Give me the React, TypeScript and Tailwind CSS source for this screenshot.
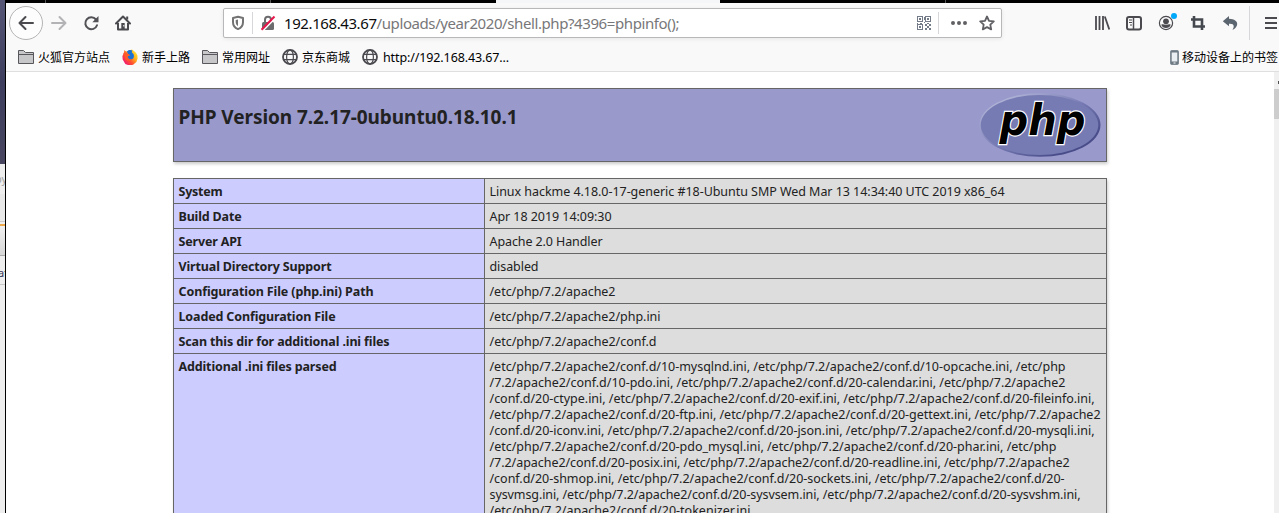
import { useLayoutEffect, useRef, useState, type ReactNode } from "react";

/** A single line of text whose tracking is adjusted to fill the given width. */
function Line({ text, width, className = "", children }: { text: string; width: number; className?: string; children?: ReactNode }) {
  const ref = useRef<HTMLSpanElement>(null);
  const [tracking, setTracking] = useState(0);
  useLayoutEffect(() => {
    if (ref.current) {
      const natural = ref.current.getBoundingClientRect().width;
      setTracking((width - natural) / text.length);
    }
  }, [text, width]);
  return (
    <span className={`block w-max whitespace-pre ${className}`}>
      <span ref={ref} style={{ letterSpacing: tracking }}>
        {children ?? text}
      </span>
    </span>
  );
}

function Icon({ children, className = "text-[#4a4a4f]" }: { children: ReactNode; className?: string }) {
  return (
    <svg viewBox="0 0 16 16" fill="none" stroke="currentColor" strokeWidth="2" className={`block h-4 w-4 shrink-0 ${className}`}>
      {children}
    </svg>
  );
}

const Folder = () => (
  <Icon className="text-[#58585c]">
    <path d="M.5 14.500v-13h5l2 2h8v11z" fill="#c7c7ca" strokeWidth="1" />
    <path d="M1 5.500h14" strokeWidth="1" />
  </Icon>
);

const Globe = () => (
  <Icon className="text-[#4a4a4f]">
    <circle cx="8" cy="8" r="7" strokeWidth="1.800" />
    <ellipse cx="8" cy="8" rx="3.400" ry="7" strokeWidth="1.200" />
    <path d="M1.500 5.300h13M1.500 10.700h13" strokeWidth="1.200" />
  </Icon>
);

const Firefox = () => (
  <svg viewBox="0 0 16 16" className="block h-4 w-4 shrink-0">
    <defs>
      <linearGradient id="flame" x1="1" y1="0.1" x2="0.1" y2="0.9">
        <stop offset="0" stopColor="#fff044" />
        <stop offset=".35" stopColor="#ffb51b" />
        <stop offset=".65" stopColor="#ff4f32" />
        <stop offset="1" stopColor="#f0127a" />
      </linearGradient>
    </defs>
    <path d="M2 3.2 2.4 1l1.7 1.4L6 2l4-1.6 2.5 2.2 1.4 1.2 1.5 2.5.2 3.2-1.2 3.5-3.3 2.8-4 .7-3.8-1.6L.7 10.6.4 7.2z" fill="url(#flame)" />
    <path d="M5 2.2c2-1.6 4.2-1.5 5.3-.6l-.5 1.8c2 1.2 2.6 3 1.9 5-.8 2-3.2 2.5-4.8 1.4L5.4 7.5 8 6.2 5.8 4.8z" fill="#1b72d5" />
    <path d="M1.5 4.2 4 3.8l2 1 1.9 1.3-2 1.1-.6 1.5c1 1.9 3 2.3 4.8 1.3-1 2.3-4.8 2.7-6.7.2z" fill="#ff5a27" />
  </svg>
);

const Phone = () => (
  <svg viewBox="0 0 9 15" className="block h-[15px] w-[9px] shrink-0">
    <rect x=".5" y=".5" width="8" height="14" rx="1.200" fill="#6f7b84" stroke="#7e8991" />
    <path d="M1.700 2.500h5.600v9H1.700z" fill="#e9eff2" />
    <path d="M3.500 13h2" stroke="#fff" strokeWidth="1" />
  </svg>
);

const QrCode = () => (
  <svg viewBox="0 0 14 14" fill="none" stroke="#737b88" className="block h-[14px] w-[14px] shrink-0" shapeRendering="crispEdges">
    <path d="M.5.5h5v5h-5zM8.5.5h5v5h-5zM.5 8.5h5v5h-5z" />
    <path d="M2 2h2v2H2zM10 2h2v2h-2zM2 10h2v2H2zM8 8h2v2H8zM10 10h2v2h-2zM12 8h2v2h-2zM8 12h2v2H8zM12 12h2v2h-2zM7 1h1v3H7zM0 7h1v1H0zM3 7h2v1H3zM7 6h1v1H7zM10 7h2v1h-2z" fill="#737b88" stroke="none" />
  </svg>
);

const UrlBar = () => (
  <div className="flex h-[30px] w-[779px] items-center rounded-[2px] border border-[#b8b8ba] bg-white shadow-[0_1px_4px_rgba(0,0,0,0.08)]">
    <div className="flex w-[28px] justify-center">
      <Icon className="text-[#737373]">
        <path d="M8 1.800 13 3v4.200c0 3.300-2.200 5.700-5 6.900-2.800-1.200-5-3.600-5-6.900V3z" strokeLinejoin="round" />
        <path d="M8 4.600v6.600C6.500 10.200 5.700 8.800 5.700 7V5.100z" fill="currentColor" stroke="none" />
      </Icon>
    </div>
    <div className="h-[22px] w-px bg-[#d7d7db]" />
    <div className="flex w-[29px] justify-center">
      <Icon className="text-[#6c6c6e]">
        <path d="M5 7V4.700a3 3 0 0 1 6 0V7" />
        <rect x="2" y="7" width="12" height="8" rx="1.500" fill="currentColor" stroke="none" />
        <path d="M3.200 15.500 15.800 2.500" stroke="#fff" strokeWidth="1.600" />
        <path d="M1.500 14.800 14.500 1.500" stroke="#e6174c" />
      </Icon>
    </div>
    <div className="w-[635px] pl-[2px]">
      <Line text="192.168.43.67/uploads/year2020/shell.php?4396=phpinfo();" width={395} className="text-[15px] leading-5 text-[#777779]">
        <span className="text-[#0c0c0d]">192.168.43.67</span>/uploads/year2020/shell.php?4396=phpinfo();
      </Line>
    </div>
    <QrCode />
    <div className="ml-[7px] mr-3 h-[22px] w-px bg-[#d7d7db]" />
    <Icon className="text-[#606064]">
      <path d="M0 8a2 2 0 1 0 4 0 2 2 0 1 0-4 0M6 8a2 2 0 1 0 4 0 2 2 0 1 0-4 0M12 8a2 2 0 1 0 4 0 2 2 0 1 0-4 0" fill="currentColor" stroke="none" />
    </Icon>
    <div className="ml-3">
      <Icon className="text-[#606064]">
        <path d="m8 1.500 2 4.300 4.800.6-3.500 3.300.9 4.700L8 12.100l-4.200 2.300.9-4.700L1.200 6.400 6 5.800z" strokeWidth="1.800" strokeLinejoin="round" />
      </Icon>
    </div>
  </div>
);

const NavBar = () => (
  <div className="flex h-10 items-center overflow-hidden">
    <div className="ml-[3px] flex h-[34px] w-[34px] shrink-0 items-center justify-center rounded-full border border-[#b4b4b6] bg-[#fdfdfd]">
      <Icon>
        <path d="M15 8H2M7.500 2 1.500 8l6 6" strokeLinecap="round" strokeLinejoin="round" />
      </Icon>
    </div>
    <div className="ml-2 flex gap-4">
      <Icon className="text-[#b3b3b5]">
        <path d="M1 8h13M8.500 2l6 6-6 6" strokeLinecap="round" strokeLinejoin="round" />
      </Icon>
      <Icon className="text-[#525256]">
        <path d="M14 10.200A6 6 0 1 1 13 4.500" strokeLinecap="round" />
        <path d="M15.500 1v6.200H9.300z" fill="currentColor" stroke="none" />
      </Icon>
      <Icon>
        <path d="m1 8.500 7-7 7 7" strokeLinecap="round" strokeLinejoin="round" />
        <path d="M3 8v6.500h10V8M12.200 1.500v3" strokeLinejoin="round" />
        <path d="M6.300 8h3.400v6H6.300z" fill="currentColor" stroke="none" />
        <path d="M8.300 10h1v1.500h-1z" fill="#fff" stroke="none" />
      </Icon>
    </div>
    <div className="ml-[92px] shrink-0">
      <UrlBar />
    </div>
    <div className="ml-[92px] flex shrink-0 gap-4">
      <Icon>
        <path d="M2 1v14M5.500 1v14M9 1v14" strokeWidth="1.800" />
        <path d="m10.800 1.500 4.500 13" strokeWidth="1.800" />
      </Icon>
      <Icon>
        <rect x="1" y="2" width="14" height="12.500" rx="2" />
        <path d="M7.500 2v12" strokeWidth="1.500" />
        <path d="M3 5h3M3 7.500h3M4 10h2" strokeWidth="1" />
      </Icon>
      <div className="relative">
        <Icon>
          <circle cx="8" cy="8" r="6.600" strokeWidth="1.200" />
          <circle cx="8" cy="6.300" r="2.900" fill="currentColor" stroke="none" />
          <path d="M3.300 9.700c1.300-.8 2.500 0 4.700 0s3.400-.8 4.700 0A5 5 0 0 1 8 13a5 5 0 0 1-4.700-3.300z" fill="currentColor" stroke="none" />
        </Icon>
        <div className="absolute -top-[2px] left-[13px] h-[6px] w-[6px] rounded-full bg-[#00a8fa]" />
      </div>
      <Icon className="text-[#45494f]">
        <path d="M4 1v10.500h11M1 4.500h11V15" strokeWidth="2.600" />
      </Icon>
      <Icon className="text-[#5b6570]">
        <path d="M7 1 .8 6.300 7 11.300V8.800c4.500-.3 6 1.500 3.500 6.200 7-3.500 6.500-11-3.500-11.200z" fill="currentColor" stroke="none" />
      </Icon>
    </div>
    <div className="ml-[11px] h-[34px] w-px shrink-0 bg-[#d7d7db]" />
    <svg viewBox="0 0 14 16" className="ml-[15px] block h-4 w-[14px] shrink-0">
      <path d="M0 3h12M0 8h12M0 13h12" stroke="#4a4a4f" strokeWidth="2" />
    </svg>
  </div>
);

const Bookmarks = () => (
  <div className="flex h-7 items-center whitespace-nowrap pl-3 text-[12px] leading-4 text-black">
    <Folder />
    <span className="ml-1 w-[84px] pt-[2px]">火狐官方站点</span>
    <Firefox />
    <span className="ml-1 w-[60px] pt-[2px]">新手上路</span>
    <Folder />
    <span className="ml-1 w-[60px] pt-[2px]">常用网址</span>
    <Globe />
    <span className="ml-1 w-[60px] pt-[2px]">京东商城</span>
    <Globe />
    <Line text="http://192.168.43.67..." width={126} className="ml-[5px] pt-px text-[12.5px]" />
    <div className="ml-auto flex items-center gap-[3px] pr-px">
      <Phone />
      <span className="pt-px">移动设备上的书签</span>
    </div>
  </div>
);

const rows: { name: string; nameWidth: number; value: string; width: number }[] = [
  { name: "System", nameWidth: 44, value: "Linux hackme 4.18.0-17-generic #18-Ubuntu SMP Wed Mar 13 14:34:40 UTC 2019 x86_64", width: 515 },
  { name: "Build Date", nameWidth: 63, value: "Apr 18 2019 14:09:30", width: 122 },
  { name: "Server API", nameWidth: 63, value: "Apache 2.0 Handler", width: 113 },
  { name: "Virtual Directory Support", nameWidth: 153, value: "disabled", width: 49 },
  { name: "Configuration File (php.ini) Path", nameWidth: 195, value: "/etc/php/7.2/apache2", width: 126 },
  { name: "Loaded Configuration File", nameWidth: 157, value: "/etc/php/7.2/apache2/php.ini", width: 171 },
  { name: "Scan this dir for additional .ini files", nameWidth: 211, value: "/etc/php/7.2/apache2/conf.d", width: 167 },
];

const parsedFiles: [string, number][] = [
  ["/etc/php/7.2/apache2/conf.d/10-mysqlnd.ini, /etc/php/7.2/apache2/conf.d/10-opcache.ini, /etc/php", 576],
  ["/7.2/apache2/conf.d/10-pdo.ini, /etc/php/7.2/apache2/conf.d/20-calendar.ini, /etc/php/7.2/apache2", 576],
  ["/conf.d/20-ctype.ini, /etc/php/7.2/apache2/conf.d/20-exif.ini, /etc/php/7.2/apache2/conf.d/20-fileinfo.ini,", 605],
  ["/etc/php/7.2/apache2/conf.d/20-ftp.ini, /etc/php/7.2/apache2/conf.d/20-gettext.ini, /etc/php/7.2/apache2", 611],
  ["/conf.d/20-iconv.ini, /etc/php/7.2/apache2/conf.d/20-json.ini, /etc/php/7.2/apache2/conf.d/20-mysqli.ini,", 605],
  ["/etc/php/7.2/apache2/conf.d/20-pdo_mysql.ini, /etc/php/7.2/apache2/conf.d/20-phar.ini, /etc/php", 567],
  ["/7.2/apache2/conf.d/20-posix.ini, /etc/php/7.2/apache2/conf.d/20-readline.ini, /etc/php/7.2/apache2", 580],
  ["/conf.d/20-shmop.ini, /etc/php/7.2/apache2/conf.d/20-sockets.ini, /etc/php/7.2/apache2/conf.d/20-", 575],
  ["sysvmsg.ini, /etc/php/7.2/apache2/conf.d/20-sysvsem.ini, /etc/php/7.2/apache2/conf.d/20-sysvshm.ini,", 591],
  ["/etc/php/7.2/apache2/conf.d/20-tokenizer.ini", 261],
];

const PhpLogo = () => (
  <svg viewBox="0 0 122 64" className="block h-16 w-[122px]">
    <defs>
      <linearGradient id="rim" x1="0" y1="0" x2="1" y2="1">
        <stop offset=".15" stopColor="#aeb2d5" />
        <stop offset=".5" stopColor="#777bb3" />
        <stop offset=".8" stopColor="#484c89" />
      </linearGradient>
    </defs>
    <ellipse cx="61" cy="32" rx="60.500" ry="31.800" fill="url(#rim)" />
    <ellipse cx="60.500" cy="32" rx="58.800" ry="30" fill="#777bb3" />
    <text
      x="20.500"
      y="41.500"
      textLength="86"
      lengthAdjust="spacingAndGlyphs"
      className="font-['DejaVu_Sans',sans-serif] text-[43px] font-bold italic"
      fill="#000"
      stroke="#fff"
      strokeWidth="2.400"
      strokeLinejoin="miter"
      paintOrder="stroke"
    >
      php
    </text>
  </svg>
);

const nameCell = "w-[310px] shrink-0 bg-[#ccccff] pl-[4.500px] pt-[5px] font-bold";
const valueCell = "w-[621px] border-l border-[#666] bg-[#dddddd] pl-[4.500px] pt-[5px]";

const PhpInfo = () => (
  <main className="ml-[167px] w-[934px] pt-4 text-[12.5px] leading-4 text-[#222]">
    <header className="flex h-[74px] justify-between border border-[#666] bg-[#9999cc] pl-[4.500px] pr-[5px] pt-1 shadow-[1px_2px_3px_#cccccc]">
      <h1 className="pt-3">
        <Line text="PHP Version 7.2.17-0ubuntu0.18.10.1" width={339} className="text-[19px] font-bold leading-6" />
      </h1>
      <PhpLogo />
    </header>
    <section className="mt-4 border border-[#666] shadow-[1px_2px_3px_#cccccc]">
      {rows.map((row) => (
        <div key={row.name} className="flex h-[25px] border-b border-[#666]">
          <div className={nameCell}>
            <Line text={row.name} width={row.nameWidth} />
          </div>
          <div className={`grow ${valueCell}`}>
            <Line text={row.value} width={row.width} />
          </div>
        </div>
      ))}
      <div className="flex">
        <div className={nameCell}>
          <Line text="Additional .ini files parsed" width={158} />
        </div>
        <div className={`grow ${valueCell}`}>
          {parsedFiles.map(([text, width]) => (
            <Line key={text} text={text} width={width} />
          ))}
        </div>
      </div>
    </section>
  </main>
);

/** The strip of the desktop and of another window visible left of the browser. */
const DesktopEdge = () => (
  <div className="flex w-[6px] shrink-0 flex-col overflow-hidden border-r border-black bg-[#eeeeee] text-[11px] leading-4">
    <div className="h-[164px] shrink-0 bg-linear-to-b from-[#555575] via-[#3d3d5e] to-[#48465f]" />
    <div className="h-[30px] shrink-0 pt-[7px] text-[#a0a0a0]">
      <span className="-ml-[5px]">py</span>
    </div>
    <div className="h-[28px] shrink-0 border-b border-[#cccccc] bg-[#e8e8e8]" />
    <div className="h-[4px] shrink-0 border-b-2 border-[#eda84a]" />
    <div className="h-[30px] shrink-0 border-b border-[#aaaaaa] bg-linear-to-b from-[#f0f0f0] to-[#d6d6d6]" />
    <div className="h-[29px] shrink-0 border-b border-[#c8c8c8] pt-[9px] text-[#333355]">
      <span className="-ml-[2px]">at</span>
    </div>
  </div>
);

export default function App() {
  return (
    <div className="flex h-[513px] w-[1279px] overflow-hidden bg-white font-['Noto_Sans','Noto_Sans_CJK_SC',sans-serif]">
      <DesktopEdge />
      <div className="flex min-w-0 grow flex-col">
        <div className="flex h-[3px] shrink-0 bg-black">
          <div className="ml-[39px] w-px bg-[#555]" />
          <div className="ml-[224px] w-px bg-[#555]" />
          <div className="ml-[225px] w-[224px] bg-[#f5f6f7]" />
          <div className="ml-[225px] w-px bg-[#555]" />
        </div>
        <div className="h-[69px] shrink-0 border-b border-[#dfdfe1] bg-[#f9f9fa]">
          <NavBar />
          <Bookmarks />
        </div>
        <div className="flex min-h-0 grow justify-between">
          <PhpInfo />
          <div className="w-[5px] bg-[#f0f0f0] pt-[9px]">
            <div className="ml-1 h-[3px] bg-[#505050]" />
            <div className="mt-[5px] h-[30px] bg-[#cdcdcd]" />
          </div>
        </div>
      </div>
    </div>
  );
}
